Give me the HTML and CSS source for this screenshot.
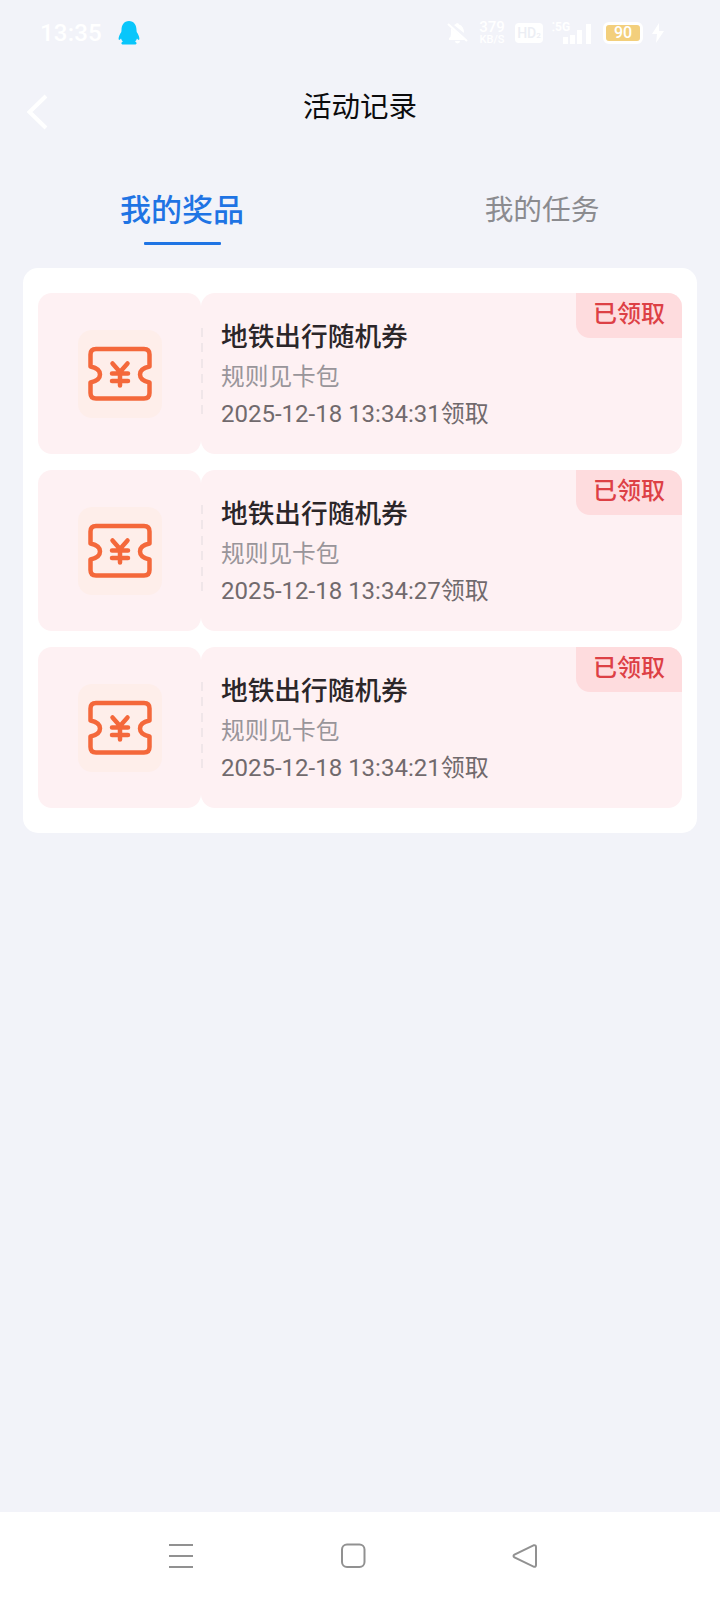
FILE: index.html
```html
<!DOCTYPE html>
<html lang="zh-CN">
<head>
<meta charset="utf-8">
<title>活动记录</title>
<link rel="stylesheet" href="styles.css">
</head>
<body>
<svg class="defs" width="0" height="0">
  <symbol id="ticket" viewBox="0 0 84 88">
    <rect class="ticket-bg" width="84" height="88" rx="14"/>
    <g class="ticket-line">
      <path d="M18 19H66Q71.500 19 71.500 24.500V36.500Q62 38.500 62 44.500T71.500 52.500V63Q71.500 68.500 66 68.500H18Q12.500 68.500 12.500 63V52.500Q22 50.500 22 44.500T12.500 36.500V24.500Q12.500 19 18 19Z"/>
      <path d="M34.500 33.500L42 42L49.500 33.500M34 43.500H50M34 51H50M42 42V55.500"/>
    </g>
  </symbol>
</svg>
<div class="screen">
  <div class="status">
    <span class="clock">13:35</span>
    <svg class="penguin" width="22" height="24" viewBox="0 0 22 24"><path d="M11 0C6 0 3.500 4 3.500 9L3.300 11C1.500 13.500 0 17 .8 18.800C1.300 19.300 2.200 18.500 3 17.500C3.500 19 4.300 20 5 20.500C3 21 2.800 23.500 5 23.500H17C19.200 23.500 19 21 17 20.500C17.700 20 18.500 19 19 17.500C19.800 18.500 20.700 19.300 21.200 18.800C22 17 20.500 13.500 18.700 11L18.500 9C18.500 4 16 0 11 0Z"/></svg>
    <div class="indicators">
      <svg class="white" width="22" height="22" viewBox="0 0 22 22"><path d="M7 3Q9 2 10 1Q12 1 12 2.500Q17 4 17 11L7 3M4 6L18 18H2V16Q4 15 4 12ZM8 19H13Q13 21 10.500 21.500Q8 21 8 19Z"/><path class="slash" d="M1 2L20 19"/></svg>
      <div class="speed"><span>379</span><span>KB/S</span></div>
      <div class="hd">HD<small>2</small></div>
      <div class="signal"><span>⁚5G</span><svg class="white" width="30" height="20" viewBox="0 0 30 20"><path d="M1 13h5v7h-5zM8 11h5v9h-5zM15 6h5v14h-5zM24 0h5v20h-5z"/></svg></div>
      <div class="battery"><b>90</b></div>
      <svg class="white bolt" width="14" height="20" viewBox="0 0 14 20"><path d="M8 0L1 11H6L5 20L13 8H8Z"/></svg>
    </div>
  </div>
  <header class="header">
    <svg class="back" width="24" height="38" viewBox="0 0 24 38"><path d="M21 3L4.500 19L21 35"/></svg>
    <h1>活动记录</h1>
  </header>
  <nav class="tabs">
    <div class="tab active">我的奖品</div>
    <div class="tab">我的任务</div>
  </nav>
  <main class="card">
    <section class="coupon">
      <div class="thumb"><svg width="84" height="88"><use href="#ticket"/></svg></div>
      <div class="info"><span class="badge">已领取</span><h2>地铁出行随机券</h2><p class="rule">规则见卡包</p><p class="time">2025-12-18 13:34:31领取</p></div>
    </section>
    <section class="coupon">
      <div class="thumb"><svg width="84" height="88"><use href="#ticket"/></svg></div>
      <div class="info"><span class="badge">已领取</span><h2>地铁出行随机券</h2><p class="rule">规则见卡包</p><p class="time">2025-12-18 13:34:27领取</p></div>
    </section>
    <section class="coupon">
      <div class="thumb"><svg width="84" height="88"><use href="#ticket"/></svg></div>
      <div class="info"><span class="badge">已领取</span><h2>地铁出行随机券</h2><p class="rule">规则见卡包</p><p class="time">2025-12-18 13:34:21领取</p></div>
    </section>
  </main>
  <footer class="sysnav">
    <svg width="26" height="26" viewBox="0 0 26 26"><path d="M1 2H25M1 13H25M1 24H25"/></svg>
    <svg width="26" height="26" viewBox="0 0 26 26"><rect x="2" y="1.500" width="22.500" height="22.500" rx="5"/></svg>
    <svg width="26" height="26" viewBox="0 0 26 26"><path d="M22 2.200L2.500 11.500Q.5 13 2.500 14.500L22 23.800Q24 24 24 22V4Q24 2 22 2.200Z"/></svg>
  </footer>
</div>
</body>
</html>
```
FILE: styles.css
```css
* { box-sizing: border-box; margin: 0; padding: 0; }
body { background: #f2f3f9; font-family: Roboto, "Noto Sans CJK SC", sans-serif; }
svg { display: block; flex: none; }
.defs { position: absolute; }
.screen { width: 720px; height: 1600px; display: flex; flex-direction: column; }

.status { height: 64px; display: flex; align-items: center; padding: 1px 55px 0 40px; color: #fff; }
.clock { width: 78px; font: 500 24px/28px Roboto, sans-serif; letter-spacing: .2px; padding-top: 1px; }
.penguin { fill: #09c6fb; }
.indicators { margin-left: auto; display: flex; align-items: center; }
.white { fill: #fff; }
.slash { stroke: #fff; stroke-width: 2; }
.speed { width: 28px; margin-left: 9px; display: flex; flex-direction: column; align-items: center; font: 500 15px/14px Roboto, sans-serif; }
.speed span:last-child { font-size: 11px; line-height: 12px; }
.hd { width: 28px; height: 20px; margin-left: 9px; border-radius: 4px; background: #fff; color: #eceef4; font: 500 14px/20px Roboto, sans-serif; text-align: center; }
.hd small { font-size: 8px; }
.signal { width: 40px; height: 22px; margin-left: 9px; display: flex; align-items: flex-end; justify-content: flex-end; position: relative; }
.signal span { position: absolute; left: 0; top: -1px; font: 700 12px/12px Roboto, sans-serif; }
.battery { width: 40px; height: 22px; margin-left: 11px; border: 3px solid #fff; border-radius: 6px; background: #f3cf7c; font: 500 16px/16px Roboto, sans-serif; text-align: center; }
.battery b { font-weight: 500; }
.bolt { margin-left: 8px; }

.header { height: 100px; padding: 29px 25px 0; display: grid; grid-template-columns: 24px 1fr 24px; align-items: start; }
.back { fill: none; stroke: #fff; stroke-width: 4; }
.header h1 { font-size: 28.500px; line-height: 30px; font-weight: 400; color: #0b0b0d; text-align: center; }

.tabs { height: 104px; display: grid; grid-template-columns: 356px 1fr; padding: 23px 0 0 4px; }
.tab { font-size: 28.700px; line-height: 46px; color: #8b8b8f; text-align: center; padding-left: 4px; }
.tab.active { padding-left: 0; font-size: 31px; line-height: 48px; font-weight: 500; color: #1f74e4; display: flex; flex-direction: column; align-items: center; }
.tab.active::after { content: ""; width: 77px; height: 3px; margin-top: 7px; border-radius: 1px; background: #1f74e4; }

.card { height: 565px; margin: 0 23px; padding: 25px 15px; border-radius: 15px; background: #fff; display: flex; flex-direction: column; justify-content: space-between; }
.coupon { height: 161px; display: grid; grid-template-columns: 163px 1fr; }
.thumb, .info { position: relative; border-radius: 14px; background: #fef1f3; }
.thumb { display: flex; align-items: center; justify-content: center; }
.ticket-bg { fill: #feeeea; }
.ticket-line { fill: none; stroke: #f4683b; stroke-width: 4.500; stroke-linecap: round; stroke-linejoin: round; }
.info { padding: 24px 20px 0; }
.info::before { content: ""; position: absolute; left: 0; top: 35px; width: 2px; height: 86px; background: repeating-linear-gradient(#f0e6e9 0 9px, transparent 9px 15.400px); }
.info h2 { font-size: 26.700px; line-height: 40px; font-weight: 500; color: #2b2629; white-space: nowrap; }
.info p { font-size: 24px; line-height: 37px; white-space: nowrap; }
.info .rule { margin-top: 2px; font-size: 23.700px; color: #99959a; }
.info .time { color: #716a6d; }
.badge { position: absolute; right: 0; top: 0; width: 106px; height: 45px; border-radius: 0 14px 0 14px; background: #fedcde; color: #dd4045; font-size: 24px; line-height: 42px; font-weight: 500; text-align: center; }

.sysnav { height: 88px; margin-top: auto; padding: 0 182px 0 168px; background: #fff; display: flex; align-items: center; justify-content: space-between; }
.sysnav svg { fill: none; stroke: #919191; stroke-width: 2; }
```
